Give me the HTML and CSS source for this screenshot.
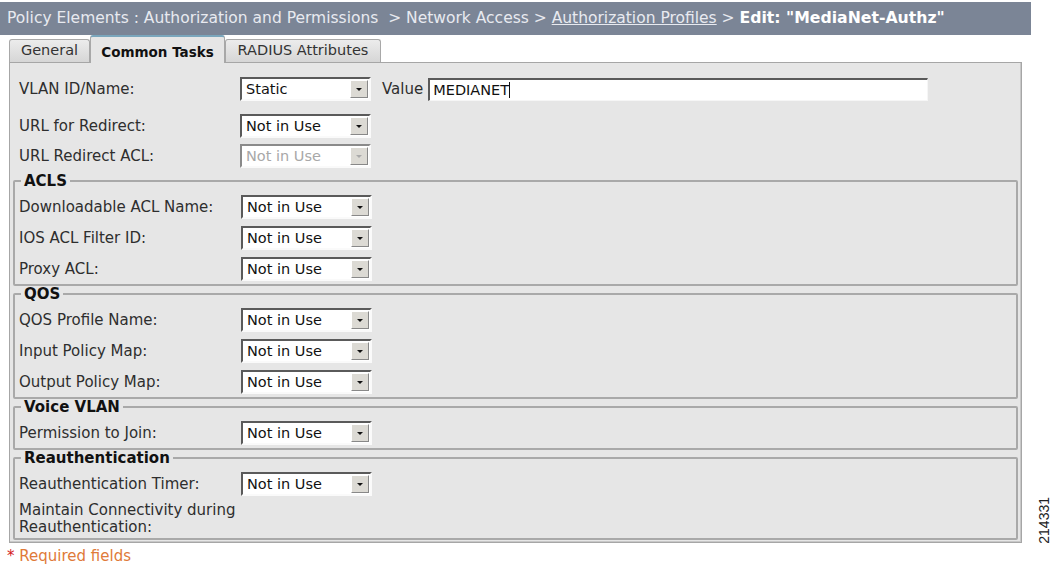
FILE: index.html
```html
<!DOCTYPE html>
<html lang="en">
<head>
    <meta charset="UTF-8">
    <title>Edit: "MediaNet-Authz"</title>
    <link rel="stylesheet" href="styles.css">
</head>
<body>
    <div class="crumbs">
        Policy Elements : Authorization and Permissions &nbsp;&gt; Network Access &gt; <a href="#">Authorization Profiles</a> &gt; <b>Edit: "MediaNet-Authz"</b>
    </div>

    <div class="tabs">
        <div class="tab general">General</div>
        <div class="tab active">Common Tasks</div>
        <div class="tab radius">RADIUS Attributes</div>
    </div>

    <div class="panel">
        <div class="row tall">
            <label>VLAN ID/Name:</label>
            <div class="field">
                <div class="select"><span>Static</span><i class="arrow"></i></div>
                <span class="value-label">Value</span>
                <div class="textbox">MEDIANET<span class="caret"></span></div>
            </div>
        </div>
        <div class="row">
            <label>URL for Redirect:</label>
            <div class="select"><span>Not in Use</span><i class="arrow"></i></div>
        </div>
        <div class="row">
            <label>URL Redirect ACL:</label>
            <div class="select disabled"><span>Not in Use</span><i class="arrow"></i></div>
        </div>

        <fieldset class="first">
            <legend>ACLS</legend>
            <div class="row">
                <label>Downloadable ACL Name:</label>
                <div class="select"><span>Not in Use</span><i class="arrow"></i></div>
            </div>
            <div class="row">
                <label>IOS ACL Filter ID:</label>
                <div class="select"><span>Not in Use</span><i class="arrow"></i></div>
            </div>
            <div class="row">
                <label>Proxy ACL:</label>
                <div class="select"><span>Not in Use</span><i class="arrow"></i></div>
            </div>
        </fieldset>

        <fieldset>
            <legend>QOS</legend>
            <div class="row">
                <label>QOS Profile Name:</label>
                <div class="select"><span>Not in Use</span><i class="arrow"></i></div>
            </div>
            <div class="row">
                <label>Input Policy Map:</label>
                <div class="select"><span>Not in Use</span><i class="arrow"></i></div>
            </div>
            <div class="row">
                <label>Output Policy Map:</label>
                <div class="select"><span>Not in Use</span><i class="arrow"></i></div>
            </div>
        </fieldset>

        <fieldset>
            <legend>Voice VLAN</legend>
            <div class="row">
                <label>Permission to Join:</label>
                <div class="select"><span>Not in Use</span><i class="arrow"></i></div>
            </div>
        </fieldset>

        <fieldset>
            <legend>Reauthentication</legend>
            <div class="row">
                <label>Reauthentication Timer:</label>
                <div class="select"><span>Not in Use</span><i class="arrow"></i></div>
            </div>
            <div class="row wrap">
                <label>Maintain Connectivity during Reauthentication:</label>
            </div>
        </fieldset>
    </div>

    <p class="required"><span class="star">*</span> Required fields</p>

    <div class="fig-id">214331</div>
</body>
</html>
```

FILE: styles.css
```css
body {
    margin: 0;
    padding-top: 2px;
    background: #fff;
    font-family: "DejaVu Sans", Verdana, sans-serif;
    font-size: 15px;
    color: #2e2e2e;
    position: relative;
    height: 570px;
}

/* breadcrumb bar */
.crumbs {
    width: 1024px;
    height: 33px;
    line-height: 31px;
    padding-left: 7px;
    background: #7b8596;
    color: #e8eaf0;
    font-size: 15.5px;
    white-space: nowrap;
}
.crumbs a {
    color: #e8eaf0;
}
.crumbs b {
    font-size: 15.7px;
    color: #fff;
}

/* tabs */
.tabs {
    display: flex;
    align-items: flex-end;
    height: 27px;
    padding-left: 9px;
}
.tab {
    box-sizing: border-box;
    height: 23px;
    line-height: 21px;
    text-align: center;
    border: 1px solid #a8a8a8;
    border-bottom: none;
    border-radius: 3px 3px 0 0;
    background: linear-gradient(#ececec, #d6d6d6);
    color: #333;
    font-size: 14.5px;
}
.tab.general {
    width: 81px;
}
.tab.radius {
    width: 156px;
}
.tab.active {
    width: 135px;
    height: 28px;
    line-height: 30px;
    background: #e6e6e6;
    border-top: 2px solid #7aa6bc;
    font-weight: bold;
    font-size: 13.5px;
    color: #111;
    margin-bottom: -1px;
    position: relative;
}

/* main panel */
.panel {
    box-sizing: border-box;
    width: 1013px;
    height: 481px;
    margin-left: 9px;
    padding: 4px 3px 3px;
    background: #e6e6e6;
    border: 1px solid #a6a6a6;
    box-shadow: inset -1px -1px 0 #c8c8c8;
}

.row {
    display: grid;
    grid-template-columns: 221px auto;
    align-items: center;
    height: 30px;
    padding-left: 6px;
}
.row.tall {
    height: 44px;
}
.row.wrap {
    height: auto;
    padding-top: 3px;
    padding-bottom: 2px;
    line-height: 17px;
}
.row.wrap label {
    width: 222px;
}

.field {
    display: flex;
    align-items: center;
}

/* fake select */
.select {
    display: flex;
    align-items: center;
    justify-content: space-between;
    width: 127px;
    height: 20px;
    background: #fff;
    border-top: 2px solid #5a5a5a;
    border-left: 2px solid #5a5a5a;
    border-right: 2px solid #fafafa;
    border-bottom: 2px solid #fafafa;
    font-size: 14.5px;
    color: #111;
}
.select span {
    padding-left: 4px;
}
.select .arrow {
    width: 16px;
    height: 16px;
    margin-right: 1px;
    background: #dcdad4;
    border: 1px solid #fff;
    border-right-color: #888;
    border-bottom-color: #888;
    position: relative;
}
.select .arrow::after {
    content: "";
    position: absolute;
    left: 5px;
    top: 7px;
    border-left: 3px solid transparent;
    border-right: 3px solid transparent;
    border-top: 3px solid #111;
}
.select.disabled {
    border-top-color: #8a8a8a;
    border-left-color: #8a8a8a;
}
.select.disabled span {
    color: #a8a8a8;
}
.select.disabled .arrow::after {
    border-top-color: #aaa;
}

.value-label {
    margin: 0 5px 0 11px;
}
.textbox {
    box-sizing: border-box;
    width: 500px;
    height: 23px;
    line-height: 20px;
    padding-left: 3px;
    background: #fff;
    border-top: 2px solid #5a5a5a;
    border-left: 2px solid #5a5a5a;
    border-right: 1px solid #f6f6f6;
    border-bottom: 1px solid #f6f6f6;
    font-size: 14.5px;
    color: #111;
}
.caret {
    display: inline-block;
    width: 1px;
    height: 16px;
    background: #111;
    vertical-align: -3px;
}

/* groups */
fieldset {
    margin: 1px 0 0;
    padding: 3px 0 0;
    border: 2px solid #a9a9a9;
    border-radius: 2px;
}
fieldset.first {
    margin-top: 3px;
}
fieldset .row {
    height: 31px;
    grid-template-columns: 222px auto;
    padding-left: 4px;
}
fieldset .row.wrap {
    height: auto;
}
legend {
    margin-left: 6px;
    padding: 0 3px;
    font-weight: bold;
    font-size: 15px;
    line-height: 14px;
    color: #111;
}

.required {
    margin: 4px 0 0 7px;
    font-size: 15px;
    color: #e07a38;
}
.required .star {
    color: #d42020;
}

.fig-id {
    position: absolute;
    left: 1036px;
    top: 497px;
    writing-mode: vertical-rl;
    transform: rotate(180deg);
    font-family: "Liberation Sans", Arial, sans-serif;
    font-size: 14px;
    color: #222;
}
```
